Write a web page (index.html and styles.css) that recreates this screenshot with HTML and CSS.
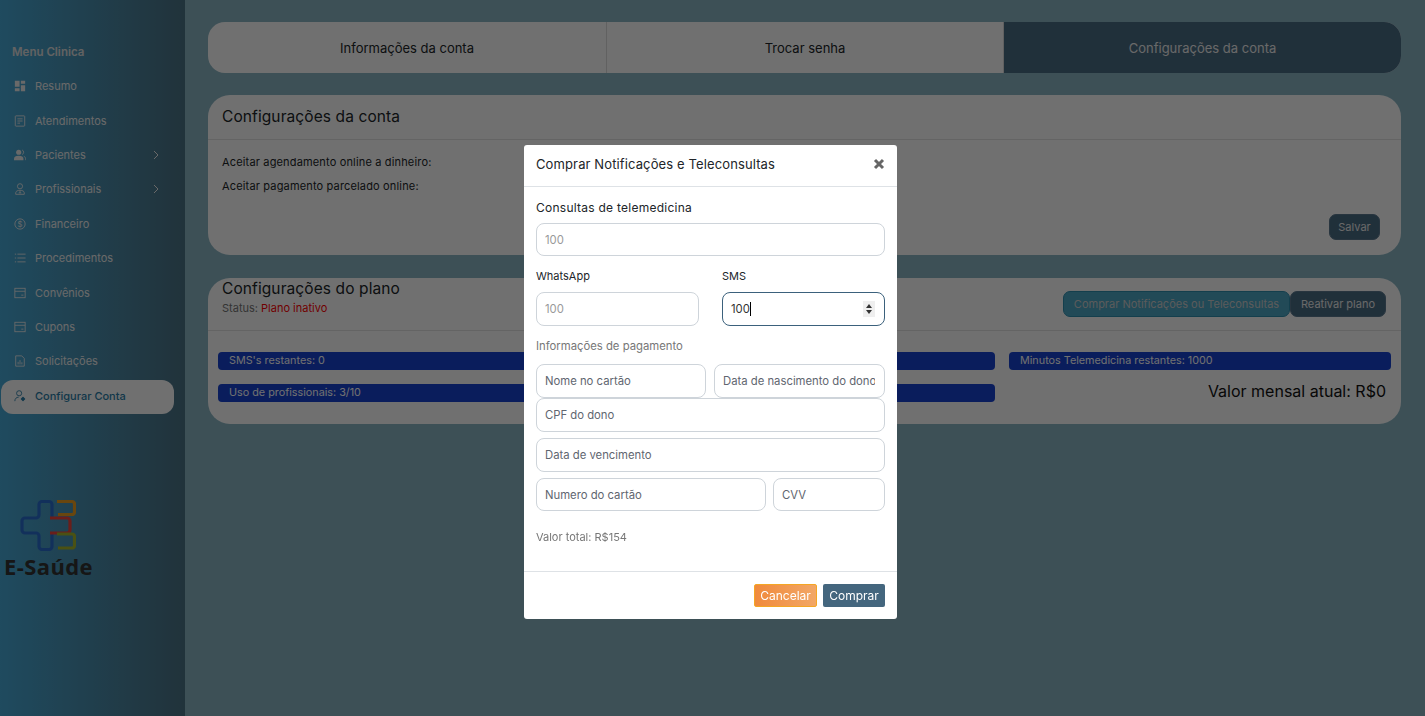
FILE: index.html
```html
<!DOCTYPE html>
<html lang="pt-BR">
<head>
    <meta charset="UTF-8">
    <meta name="viewport" content="width=device-width, initial-scale=1.0">
    <title>Configurar Conta</title>
    <link rel="stylesheet" href="styles.css">
</head>
<body>
    <!-- Menu lateral -->
    <aside class="sidebar">
        <h2 class="menu-title">Menu Clinica</h2>
        <nav class="menu">
            <a class="menu-item">
                <svg class="menu-icon" viewBox="0 0 14 14"><path fill="currentColor" d="M1 1h5.5v7H1zM8 1h5v3.5H8zM8 6h5v7H8zM1 9.5h5.5V13H1z"/></svg>
                <span>Resumo</span>
            </a>
            <a class="menu-item">
                <svg class="menu-icon" viewBox="0 0 14 14" fill="none" stroke="currentColor"><rect x="1.5" y="1" width="11" height="12" rx=".8"/><path d="M4 4.5h6M4 7h6M4 9.5h3"/></svg>
                <span>Atendimentos</span>
            </a>
            <a class="menu-item">
                <svg class="menu-icon" viewBox="0 0 14 14"><circle cx="5.5" cy="3.8" r="3" fill="currentColor"/><path fill="currentColor" d="M0 13v-1.6c0-2 2-3.4 5.5-3.4s5.5 1.4 5.5 3.4V13z"/><path fill="none" stroke="currentColor" d="M9.5 1.2a2.8 2.8 0 0 1 0 5.2M11.5 8.6c1.4.6 2.2 1.6 2.2 3V13"/></svg>
                <span>Pacientes</span>
                <svg class="chevron" viewBox="0 0 8 10" fill="none" stroke="currentColor"><path d="M2 1l4 4-4 4"/></svg>
            </a>
            <a class="menu-item">
                <svg class="menu-icon" viewBox="0 0 14 14" fill="none" stroke="currentColor"><circle cx="7" cy="3.8" r="3"/><path d="M2 13.2v-1.7c0-1.8 2-3 5-3s5 1.200 5 3v1.700zM7 9v2.500M5.500 11.500h3"/></svg>
                <span>Profissionais</span>
                <svg class="chevron" viewBox="0 0 8 10" fill="none" stroke="currentColor"><path d="M2 1l4 4-4 4"/></svg>
            </a>
            <a class="menu-item">
                <svg class="menu-icon" viewBox="0 0 14 14"><circle cx="7" cy="7" r="6" fill="none" stroke="currentColor"/><text class="dollar" x="7" y="10" text-anchor="middle">$</text></svg>
                <span>Financeiro</span>
            </a>
            <a class="menu-item">
                <svg class="menu-icon" viewBox="0 0 14 14" fill="none" stroke="currentColor"><path d="M1 2.500h1.500M4 2.500h9.500M1 7h1.500M4 7h9.500M1 11.500h1.500M4 11.500h9.500"/></svg>
                <span>Procedimentos</span>
            </a>
            <a class="menu-item">
                <svg class="menu-icon" viewBox="0 0 14 14" fill="none" stroke="currentColor"><rect x="1" y="1.500" width="12" height="11"/><path d="M1 5h12M8.500 9.500h2.500"/></svg>
                <span>Convênios</span>
            </a>
            <a class="menu-item">
                <svg class="menu-icon" viewBox="0 0 14 14" fill="none" stroke="currentColor"><rect x="1" y="1.500" width="12" height="11"/><path d="M1 5h12M8.500 9.500h2.500"/></svg>
                <span>Cupons</span>
            </a>
            <a class="menu-item">
                <svg class="menu-icon" viewBox="0 0 14 14" fill="none" stroke="currentColor"><path d="M2 1h7l3 3v9H2zM4.800 11V8M7 11V6M9.200 11V8.500"/></svg>
                <span>Solicitações</span>
            </a>
            <a class="menu-item menu-item-active">
                <svg class="menu-icon" viewBox="0 0 14 14" fill="none" stroke="currentColor"><circle cx="6" cy="3.800" r="3"/><path d="M1 13c0-2.800 1.500-4.500 4.500-4.700"/><circle cx="10.500" cy="10.500" r="1.700" fill="currentColor"/><path d="M10.500 8v5M8 10.500h5"/></svg>
                <span>Configurar Conta</span>
            </a>
        </nav>
        <div class="logo">
            <svg class="logo-mark" viewBox="0 0 56 52" fill="none" stroke-width="3.200">
                <path stroke="#2a6fd0" d="M32 18V5.500a3 3 0 0 0-3-3h-7a3 3 0 0 0-3 3V16a3 3 0 0 1-3 3H5a3 3 0 0 0-3 3v9a3 3 0 0 0 3 3h11a3 3 0 0 1 3 3v10.500a3 3 0 0 0 3 3h7a3 3 0 0 0 3-3V35"/>
                <path stroke="#f2453d" d="M30 19h17a3 3 0 0 1 3 3v9a3 3 0 0 1-3 3H30"/>
                <path stroke="#f0a020" d="M37 2.500h15a2.500 2.500 0 0 1 2.500 2.500v8a2.500 2.500 0 0 1-2.500 2.500H38"/>
                <path stroke="#a8b82c" d="M37 35h15a2.500 2.500 0 0 1 2.500 2.500v9a2.500 2.500 0 0 1-2.500 2.500H38"/>
            </svg>
            <div class="logo-name">E-Saúde</div>
        </div>
    </aside>

    <!-- Conteudo -->
    <main class="content">
        <div class="tabs">
            <div class="tab">Informações da conta</div>
            <div class="tab">Trocar senha</div>
            <div class="tab tab-active">Configurações da conta</div>
        </div>

        <section class="card">
            <div class="card-header">
                <h3 class="card-title">Configurações da conta</h3>
            </div>
            <div class="card-body">
                <p class="option">Aceitar agendamento online a dinheiro:</p>
                <p class="option">Aceitar pagamento parcelado online:</p>
                <div class="card-actions">
                    <button class="btn-dark btn-save">Salvar</button>
                </div>
            </div>
        </section>

        <section class="card plan-card">
            <div class="card-header plan-header">
                <div class="plan-info">
                    <h3 class="card-title">Configurações do plano</h3>
                    <div class="status">Status: <span class="status-off">Plano inativo</span></div>
                </div>
                <div class="plan-buttons">
                    <button class="btn-blue">Comprar Notificações ou Teleconsultas</button>
                    <button class="btn-dark">Reativar plano</button>
                </div>
            </div>
            <div class="plan-body">
                <div class="bar">SMS's restantes: 0</div>
                <div class="bar">Minutos Telemedicina restantes: 1000</div>
                <div class="bar">Uso de profissionais: 3/10</div>
                <div class="monthly">Valor mensal atual: R$0</div>
            </div>
        </section>
    </main>

    <!-- Modal de compra -->
    <div class="overlay">
        <div class="modal">
            <div class="modal-header">
                <h4 class="modal-title">Comprar Notificações e Teleconsultas</h4>
                <svg class="modal-close" viewBox="0 0 12 12"><path fill="none" stroke="currentColor" stroke-width="3" d="M2 2l8 8M10 2l-8 8"/></svg>
            </div>
            <div class="modal-body">
                <label class="label label-first">Consultas de telemedicina</label>
                <input class="input input-qty input-short" type="text" placeholder="100">
                <div class="row-two">
                    <div>
                        <label class="label">WhatsApp</label>
                        <input class="input input-qty" type="text" placeholder="100">
                    </div>
                    <div>
                        <label class="label">SMS</label>
                        <div class="input input-focus">
                            <span>100</span><span class="caret"></span>
                            <svg class="spinner" viewBox="0 0 12 16"><path fill="#333" d="M6 3l3 4H3zM6 13L3 9h6z"/></svg>
                        </div>
                    </div>
                </div>
                <div class="pay-title">Informações de pagamento</div>
                <div class="pay-row pay-first">
                    <input class="input" type="text" placeholder="Nome no cartão">
                    <input class="input" type="text" placeholder="Data de nascimento do dono">
                </div>
                <input class="input" type="text" placeholder="CPF do dono">
                <input class="input pay-gap" type="text" placeholder="Data de vencimento">
                <div class="pay-row pay-card pay-gap">
                    <input class="input input-short" type="text" placeholder="Numero do cartão">
                    <input class="input input-short" type="text" placeholder="CVV">
                </div>
                <div class="total">Valor total: R$154</div>
            </div>
            <div class="modal-footer">
                <button class="btn-cancel">Cancelar</button>
                <button class="btn-buy">Comprar</button>
            </div>
        </div>
    </div>
</body>
</html>
```

FILE: styles.css
```css
* {
    box-sizing: border-box;
}
html, body {
    height: 100%;
}
body {
    margin: 0;
    display: flex;
    overflow: hidden;
    font-family: Inter, "Noto Sans", sans-serif;
    color: #212529;
    background-color: #8cb7c5;
}
button {
    font-family: inherit;
    cursor: pointer;
}

/* Menu lateral */
.sidebar {
    width: 185px;
    height: 716px;
    flex-shrink: 0;
    padding-top: 45px;
    color: #f0f0f0;
    background: linear-gradient(90deg, #47aad8, #4d7486);
}
.menu-title {
    margin: 0 0 10px 12px;
    font-size: 11.5px;
    line-height: 14px;
    font-weight: 600;
    color: #e0e0e0;
}
.menu {
    display: flex;
    flex-direction: column;
}
.menu-item {
    display: flex;
    align-items: center;
    gap: 9px;
    width: 173px;
    height: 34.4px;
    margin-left: 1px;
    padding-left: 13px;
    font-size: 11px;
}
.menu-item-active {
    height: 34px;
    margin-top: 1px;
    padding-bottom: 1px;
    border-radius: 12px;
    background-color: #fff;
    color: #2b7ea8;
    font-weight: 500;
}
.menu-icon {
    width: 12px;
    height: 12px;
    flex-shrink: 0;
}
.dollar {
    font-size: 9px;
    fill: currentColor;
}
.chevron {
    width: 8px;
    height: 10px;
    margin-left: auto;
    margin-right: 14px;
}
.logo {
    margin-top: 85px;
    margin-left: 4px;
}
.logo-mark {
    display: block;
    width: 56px;
    height: 52px;
    margin-left: 16px;
}
.logo-name {
    margin-top: 3px;
    font-family: "Open Sans", sans-serif;
    font-size: 22px;
    line-height: 24px;
    font-weight: 700;
    letter-spacing: .4px;
    color: #333;
}

/* Conteudo */
.content {
    flex: 1;
    padding: 22px 24px 0 23px;
    display: flex;
    flex-direction: column;
    gap: 22px;
}
.tabs {
    display: grid;
    grid-template-columns: 399px 397px 397px;
    height: 51px;
    border-radius: 17px;
    overflow: hidden;
    background-color: #fff;
}
.tab {
    display: flex;
    align-items: center;
    justify-content: center;
    font-size: 13px;
    border-right: 1px solid #dcdcdc;
}
.tab-active {
    border-right: none;
    background-color: #4a6d85;
    color: #eee;
}
.card {
    border-radius: 22px;
    background-color: #fff;
}
.plan-card {
    margin-top: 1px;
}
.card-header {
    height: 45px;
    padding: 0 14px;
    display: flex;
    align-items: center;
    border-bottom: 1px solid #e4e4e4;
}
.card-title {
    margin: 0;
    font-size: 15.5px;
    line-height: 20px;
    font-weight: 400;
    letter-spacing: .1px;
}
.card-body {
    height: 115px;
    padding: 16px 14px 0;
}
.option {
    margin: 0 0 12px;
    font-size: 11px;
    line-height: 12px;
    letter-spacing: .16px;
}
.card-actions {
    display: flex;
    justify-content: flex-end;
    margin: 22px 7px 0 0;
}
.btn-dark {
    width: 96px;
    height: 26px;
    padding: 0;
    border: 1px solid #5c7a90;
    border-radius: 7px;
    font-size: 11px;
    color: #eee;
    background-color: #4a6d85;
}
.btn-save {
    width: 51px;
}
.plan-header {
    height: 53px;
    justify-content: space-between;
    align-items: flex-start;
    padding-right: 15px;
}
.plan-info {
    padding-top: 1px;
}
.plan-buttons {
    display: flex;
    margin-top: 13px;
}
.status {
    margin-top: 1px;
    font-size: 11px;
    line-height: 16px;
    color: #777;
}
.status-off {
    color: #f00;
}
.plan-body {
    display: grid;
    grid-template-columns: 777px 382px;
    justify-content: space-between;
    row-gap: 14px;
    padding: 21px 10px 22px;
    align-items: start;
}
.bar {
    height: 18px;
    padding-left: 11px;
    border-radius: 4px;
    font-size: 10.8px;
    line-height: 18px;
    color: #fff;
    background-color: #1742d1;
}
.monthly {
    margin-top: -4px;
    padding-right: 5px;
    text-align: right;
    font-size: 16px;
    line-height: 22px;
    color: #111;
}
.btn-blue {
    height: 26px;
    width: 227px;
    padding: 0;
    border: 1px solid #2f8fb0;
    border-radius: 7px;
    font-size: 11px;
    color: #d0d0d0;
    background-color: #4fa8c6;
}

/* Modal */
.overlay {
    position: fixed;
    top: 0;
    left: 0;
    right: 0;
    bottom: 0;
    display: flex;
    justify-content: center;
    align-items: flex-start;
    padding: 145px 4px 0 0;
    background-color: rgba(0, 0, 0, .56);
}
.modal {
    width: 373px;
    height: 474px;
    display: flex;
    flex-direction: column;
    border-radius: 3px;
    background-color: #fff;
}
.modal-header {
    height: 42px;
    flex-shrink: 0;
    padding: 0 12px 3px 12px;
    display: flex;
    align-items: center;
    justify-content: space-between;
    border-bottom: 1px solid #dee2e6;
}
.modal-title {
    margin: 0;
    font-size: 13px;
    font-weight: 400;
    letter-spacing: .12px;
}
.modal-close {
    width: 12px;
    height: 12px;
    color: #666;
}
.modal-body {
    flex: 1;
    padding: 0 12px;
}
.label {
    display: block;
    height: 16px;
    margin: 8px 0;
    font-size: 11px;
    line-height: 16px;
}
.label-first {
    margin: 13px 0 7px;
    font-size: 12px;
    letter-spacing: .25px;
}
.input {
    display: block;
    width: 100%;
    height: 34px;
    padding: 0 9px 0 8px;
    border: 1px solid #ced4da;
    border-radius: 8px;
    font-family: inherit;
    font-size: 11.3px;
    color: #495057;
    background-color: #fff;
}
.input-short {
    height: 33px;
}
.input::placeholder {
    color: #5f6670;
    opacity: 1;
}
.input-qty::placeholder {
    color: #999;
}
.row-two {
    display: grid;
    grid-template-columns: 1fr 1fr;
    gap: 23px;
    margin-top: 4px;
}
.input-focus {
    display: flex;
    align-items: center;
    position: relative;
    border-color: #3b617c;
    color: #333;
}
.caret {
    width: 1px;
    height: 14px;
    background-color: #000;
}
.spinner {
    position: absolute;
    right: 9px;
    top: 8px;
    width: 12px;
    height: 16px;
    background-color: #efefef;
}
.pay-title {
    margin-top: 12px;
    font-size: 11.3px;
    line-height: 16px;
    color: #777;
}
.pay-row {
    display: grid;
    gap: 8px;
}
.pay-first {
    grid-template-columns: 170px 171px;
    margin-top: 10px;
}
.pay-gap {
    margin-top: 6px;
}
.pay-card {
    grid-template-columns: 230px 112px;
    gap: 7px;
}
.total {
    margin-top: 18px;
    font-size: 11px;
    line-height: 16px;
    color: #777;
}
.modal-footer {
    height: 48px;
    flex-shrink: 0;
    padding: 12px 12px 0 0;
    display: flex;
    justify-content: flex-end;
    gap: 6px;
    border-top: 1px solid #dee2e6;
}
.btn-cancel,
.btn-buy {
    height: 23px;
    padding: 0;
    border-radius: 2px;
    font-size: 12px;
    color: #fff;
}
.btn-cancel {
    width: 63px;
    border: 1px solid #f5a623;
    background: linear-gradient(90deg, #f08a3c, #f2a766);
}
.btn-buy {
    width: 62px;
    border: none;
    background-color: #44667e;
}
```
